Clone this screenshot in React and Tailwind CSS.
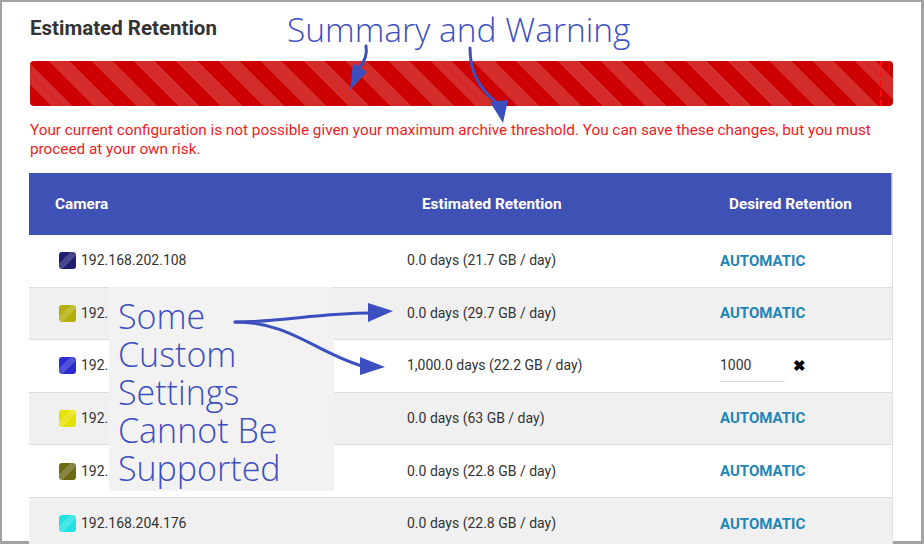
import React from "react";

const rows = [
  { ip: "192.168.202.108", est: "0.0 days (21.7 GB / day)", swatch: "bg-[#1e1e72]", shade: "bg-white" },
  { ip: "192.168.202.109", est: "0.0 days (29.7 GB / day)", swatch: "bg-[#b3ae08]", shade: "bg-[#f0f0f0]" },
  { ip: "192.168.202.110", est: "1,000.0 days (22.2 GB / day)", swatch: "bg-[#2b2bd0]", shade: "bg-white", custom: true },
  { ip: "192.168.202.111", est: "0.0 days (63 GB / day)", swatch: "bg-[#e6e200]", shade: "bg-[#f0f0f0]" },
  { ip: "192.168.202.112", est: "0.0 days (22.8 GB / day)", swatch: "bg-[#6c6a12]", shade: "bg-white" },
  { ip: "192.168.204.176", est: "0.0 days (22.8 GB / day)", swatch: "bg-[#22e2e2]", shade: "bg-[#f0f0f0]" },
];

function App() {
  return (
    <div className="relative w-[924px] h-[544px] overflow-hidden bg-white font-['Roboto',sans-serif]">
      <div className="h-full border-t-2 border-l-2 border-r-[3px] border-b-[3px] border-[#a3a3a3] pl-[28px] pr-[28px] pt-[14px]">
        <h1 className="text-[20.5px] leading-[24px] font-bold text-[#333]">Estimated Retention</h1>

        {/* summary bar */}
        <div className="relative mt-[21px] h-[45px] rounded-[4px] bg-[repeating-linear-gradient(45deg,#cc0000_0px,#cc0000_15px,#d42b2b_15px,#d42b2b_30px)]">
          <div className="absolute top-0 bottom-0 left-[850px] border-l-2 border-dashed border-[#ff1010]" />
        </div>

        <p className="mt-[15px] text-[15.3px] leading-[19px] text-[#f01c1c]">
          Your current configuration is not possible given your maximum archive threshold. You can save these changes, but you must proceed at your own risk.
        </p>

        {/* table */}
        <div className="mt-[14px] ml-[-1px] w-[864px] border-r border-[#e0e0e0]">
          <div className="grid grid-cols-[368px_313px_1fr] h-[62px] items-center bg-[#3f51b5] text-white text-[15.3px] font-bold border-r border-[#7fb7e6]">
            <div className="pl-[26px]">Camera</div>
            <div className="pl-[25px]">Estimated Retention</div>
            <div className="pl-[19px]">Desired Retention</div>
          </div>
          {rows.map((r, i) => (
            <div
              key={i}
              className={`grid grid-cols-[368px_313px_1fr] h-[52.6px] items-center border-b border-[#dddddd] text-[14px] text-[#333] ${r.shade}`}
            >
              <div className="pl-[30px] flex items-center gap-[5px]">
                <span
                  className={`w-[17px] h-[17px] rounded-[3px] ${r.swatch} bg-[linear-gradient(135deg,transparent_35%,rgba(255,255,255,0.18)_35%,rgba(255,255,255,0.18)_60%,transparent_60%)]`}
                />
                <span>{r.ip}</span>
              </div>
              <div className="pl-[10px]">{r.est}</div>
              <div className="pl-[10px]">
                {r.custom ? (
                  <div className="flex items-center">
                    <div className="w-[65px] border-b border-[#dcdcdc] pt-[6px] pb-[5px]">1000</div>
                    <span className="ml-[8px] text-[15px] font-bold text-black">✖</span>
                  </div>
                ) : (
                  <span className="text-[15px] font-bold text-[#2185b5]">AUTOMATIC</span>
                )}
              </div>
            </div>
          ))}
        </div>
      </div>

      {/* annotations */}
      <div className="absolute left-[287px] top-[13px] text-[33.5px] leading-none text-[#3c4fbf] font-['Open_Sans',sans-serif] font-light whitespace-nowrap">
        Summary and Warning
      </div>

      <div className="absolute left-[109px] top-[287px] w-[225px] h-[204px] bg-[#f2f2f2] pl-[9px] pt-[10px] text-[34px] leading-[38px] text-[#3c4fbf] font-['Open_Sans',sans-serif] font-light">
        Some
        <br />
        Custom
        <br />
        Settings
        <br />
        Cannot Be
        <br />
        Supported
      </div>

      <svg className="absolute left-0 top-0 pointer-events-none" width="924" height="544" viewBox="0 0 924 544">
        <g fill="none" stroke="#3c4fbf" strokeWidth="3" strokeLinecap="round">
          <path d="M 366 46 Q 368 58 359 68" />
          <path d="M 470 48 C 470 68 476 86 497 103" />
          <path d="M 235 322 C 280 322 320 313 370 313" />
          <path d="M 235 322 C 290 322 315 352 362 366" />
        </g>
        <g fill="#3c4fbf">
          <polygon points="350,90 353,63 367,72" />
          <polygon points="503,123 490,102 508,100" />
          <polygon points="393,311 368,303 368,322" />
          <polygon points="385,367 360,357 360,375" />
        </g>
      </svg>
    </div>
  );
}

export default App;
